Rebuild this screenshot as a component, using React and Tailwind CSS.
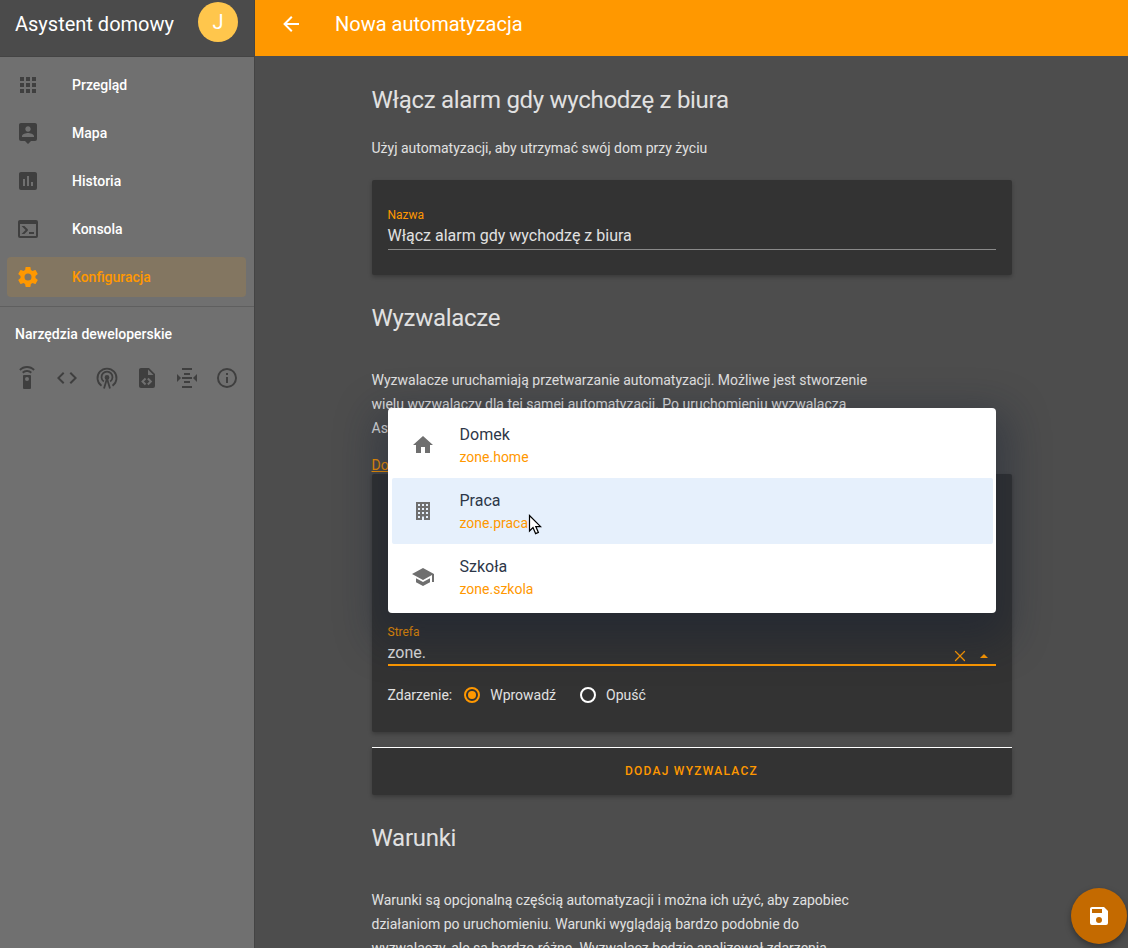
import { X } from "lucide-react";

const ICONS = {
    apps: "M4,8H8V4H4V8M10,20H14V16H10V20M4,20H8V16H4V20M4,14H8V10H4V14M10,14H14V10H10V14M16,4V8H20V4H16M10,8H14V4H10V8M16,14H20V10H16V14M16,20H20V16H16V20Z",
    map: "M18,16H6V15.1C6,13.1 10,12 12,12C14,12 18,13.1 18,15.1M12,5.3C13.5,5.3 14.7,6.5 14.7,8C14.7,9.5 13.5,10.7 12,10.7C10.5,10.7 9.3,9.5 9.3,8C9.3,6.5 10.5,5.3 12,5.3M19,2H5C3.89,2 3,2.89 3,4V18A2,2 0 0,0 5,20H9L12,23L15,20H19A2,2 0 0,0 21,18V4C21,2.89 20.1,2 19,2Z",
    poll: "M17,17H15V13H17M13,17H11V7H13M9,17H7V10H9M19,3H5C3.89,3 3,3.89 3,5V19A2,2 0 0,0 5,21H19A2,2 0 0,0 21,19V5C21,3.89 20.1,3 19,3Z",
    console: "M20,19V7H4V19H20M20,3A2,2 0 0,1 22,5V19A2,2 0 0,1 20,21H4A2,2 0 0,1 2,19V5C2,3.89 2.9,3 4,3H20M13,17V15H18V17H13M9.58,13L5.57,9H8.4L11.7,12.3C12.09,12.69 12.09,13.33 11.7,13.72L8.42,17H5.59L9.58,13Z",
    settings: "M12,15.5A3.5,3.5 0 0,1 8.5,12A3.5,3.5 0 0,1 12,8.5A3.5,3.5 0 0,1 15.5,12A3.5,3.5 0 0,1 12,15.5M19.43,12.97C19.47,12.65 19.5,12.33 19.5,12C19.5,11.67 19.47,11.34 19.43,11L21.54,9.37C21.73,9.22 21.78,8.95 21.66,8.73L19.66,5.27C19.54,5.05 19.27,4.96 19.05,5.05L16.56,6.05C16.04,5.66 15.5,5.32 14.87,5.07L14.5,2.42C14.46,2.18 14.25,2 14,2H10C9.75,2 9.54,2.18 9.5,2.42L9.13,5.07C8.5,5.32 7.96,5.66 7.44,6.05L4.95,5.05C4.73,4.96 4.46,5.05 4.34,5.27L2.34,8.73C2.21,8.95 2.27,9.22 2.46,9.37L4.57,11C4.53,11.34 4.5,11.67 4.5,12C4.5,12.33 4.53,12.65 4.57,12.97L2.46,14.63C2.27,14.78 2.21,15.05 2.34,15.27L4.34,18.73C4.46,18.95 4.73,19.03 4.95,18.95L7.44,17.94C7.96,18.34 8.5,18.68 9.13,18.93L9.5,21.58C9.54,21.82 9.75,22 10,22H14C14.25,22 14.46,21.82 14.5,21.58L14.87,18.93C15.5,18.67 16.04,18.34 16.56,17.94L19.05,18.95C19.27,19.03 19.54,18.95 19.66,18.73L21.66,15.27C21.78,15.05 21.73,14.78 21.54,14.63L19.43,12.97Z",
    remote: "M12,0C8.96,0 6.21,1.23 4.22,3.22L5.63,4.63C7.26,3 9.5,2 12,2C14.5,2 16.74,3 18.36,4.64L19.77,3.23C17.79,1.23 15.04,0 12,0M7.05,6.05L8.46,7.46C9.37,6.56 10.62,6 12,6C13.38,6 14.63,6.56 15.54,7.46L16.95,6.05C15.68,4.78 13.93,4 12,4C10.07,4 8.32,4.78 7.05,6.05M12,15A2,2 0 0,1 10,13A2,2 0 0,1 12,11A2,2 0 0,1 14,13A2,2 0 0,1 12,15M15,9H9A1,1 0 0,0 8,10V22A1,1 0 0,0 9,23H15A1,1 0 0,0 16,22V10A1,1 0 0,0 15,9Z",
    code: "M14.6,16.6L19.2,12L14.6,7.4L16,6L22,12L16,18L14.6,16.6M9.4,16.6L4.8,12L9.4,7.4L8,6L2,12L8,18L9.4,16.6Z",
    fileCode: "M13,9H18.5L13,3.5V9M6,2H14L20,8V20A2,2 0 0,1 18,22H6C4.89,22 4,21.1 4,20V4C4,2.89 4.89,2 6,2M6.12,15.5L9.86,19.24L11.28,17.83L8.95,15.5L11.28,13.17L9.86,11.76L6.12,15.5M17.28,15.5L13.54,11.76L12.12,13.17L14.45,15.5L12.12,17.83L13.54,19.24L17.28,15.5Z",
    events: "M7,2H17V4H7V2M9,7H15V9H9V7M7,11H17V13H7V11M9,15H15V17H9V15M7,20H17V22H7V20M2,8L6,12L2,16V8M22,8V16L18,12L22,8Z",
    info: "M11,9H13V7H11M12,20C7.59,20 4,16.41 4,12C4,7.59 7.59,4 12,4C16.41,4 20,7.59 20,12C20,16.41 16.41,20 12,20M12,2A10,10 0 0,0 2,12A10,10 0 0,0 12,22A10,10 0 0,0 22,12A10,10 0 0,0 12,2M11,17H13V11H11V17Z",
    home: "M10,20V14H14V20H19V12H22L12,3L2,12H5V20H10Z",
    office: "M5,3V21H11V17.5H13V21H19V3H5M7,5H9V7H7V5M11,5H13V7H11V5M15,5H17V7H15V5M7,9H9V11H7V9M11,9H13V11H11V9M15,9H17V11H15V9M7,13H9V15H7V13M11,13H13V15H11V13M15,13H17V15H15V13M7,17H9V19H7V17M15,17H17V19H15V17Z",
    school: "M12,3L1,9L12,15L21,10.09V17H23V9M5,13.18V17.18L12,21L19,17.18V13.18L12,17L5,13.18Z",
    save: "M15,9H5V5H15M12,19A3,3 0 0,1 9,16A3,3 0 0,1 12,13A3,3 0 0,1 15,16A3,3 0 0,1 12,19M17,3H5C3.89,3 3,3.9 3,5V19A2,2 0 0,0 5,21H19A2,2 0 0,0 21,19V7L17,3Z",
    back: "M20,11V13H8L13.5,18.5L12.08,19.92L4.16,12L12.08,4.08L13.5,5.5L8,11H20Z",
};

function Icon({ d, className }) {
    return (
        <svg viewBox="0 0 24 24" className={`w-6 h-6 shrink-0 fill-current ${className || ""}`}>
            <path d={d} />
        </svg>
    );
}

function RadioTower({ className }) {
    return (
        <svg viewBox="0 0 24 24" className={`w-6 h-6 shrink-0 ${className || ""}`} fill="none" stroke="currentColor" strokeWidth="1.8">
            <path d="M6.5 19.8A9.5 9.5 0 1 1 17.5 19.8" />
            <path d="M8.8 15.6A5.5 5.5 0 1 1 15.2 15.6" />
            <circle cx="12" cy="11.5" r="1.5" fill="currentColor" />
            <path d="M12 12.5L9 22.5M12 12.5L15 22.5" />
        </svg>
    );
}

const NAV = [
    { label: "Przegląd", icon: ICONS.apps },
    { label: "Mapa", icon: ICONS.map },
    { label: "Historia", icon: ICONS.poll },
    { label: "Konsola", icon: ICONS.console },
    { label: "Konfiguracja", icon: ICONS.settings, active: true },
];

const ZONES = [
    { name: "Domek", id: "zone.home", icon: ICONS.home },
    { name: "Praca", id: "zone.praca", icon: ICONS.office, hover: true },
    { name: "Szkoła", id: "zone.szkola", icon: ICONS.school },
];

function Sidebar() {
    return (
        <aside className="w-[255px] shrink-0 h-full bg-[#707070] text-white">
            <div className="h-[57px] bg-[#4b4b4b] border-b border-[#444] flex items-start pl-[15px] pr-[17px]">
                <div className="text-xl leading-[48px] flex-1">Asystent domowy</div>
                <div className="mt-0.5 w-10 h-10 rounded-full bg-[#ffc64c] flex items-center justify-center text-xl text-white">J</div>
            </div>

            <nav className="pt-2 pl-[7px] pr-[9px] flex flex-col gap-2">
                {NAV.map((item) => (
                    <div
                        key={item.label}
                        className={`h-10 flex items-center pl-[9px] rounded text-sm font-medium ${item.active ? "bg-[#837661] text-[#ff9800]" : "text-white"}`}
                    >
                        <Icon d={item.icon} className={item.active ? "text-[#ff9800]" : "text-[#3f3f3f]"} />
                        <span className="ml-8">{item.label}</span>
                    </div>
                ))}
            </nav>

            <div className="mt-[9px] border-t border-[#5f5f5f]"></div>

            <div className="pl-[15px] pt-[18px] text-sm font-medium leading-[18px]">Narzędzia deweloperskie</div>

            <div className="flex gap-4 pl-[15px] mt-[23px] text-[#3f3f3f]">
                <Icon d={ICONS.remote} />
                <Icon d={ICONS.code} />
                <RadioTower />
                <Icon d={ICONS.fileCode} />
                <Icon d={ICONS.events} />
                <Icon d={ICONS.info} />
            </div>
        </aside>
    );
}

function Card({ className, children }) {
    return (
        <div className={`bg-[#333333] rounded-[2px] shadow-[0_2px_4px_rgba(0,0,0,0.25)] ${className || ""}`}>
            {children}
        </div>
    );
}

function ZoneDropdown() {
    return (
        <div className="absolute left-[16.5px] -top-[66px] w-[608px] bg-white rounded pt-1 pb-[3px] pl-1 pr-[3px] shadow-[0_16px_40px_12px_rgba(20,30,50,0.4)] z-10">
            {ZONES.map((zone) => (
                <div key={zone.id} className={`h-[66px] flex items-center rounded-[2px] ${zone.hover ? "bg-[#e6f0fc]" : ""}`}>
                    <Icon d={zone.icon} className="ml-[19px] text-[#6f6f6f]" />
                    <div className="ml-[24.5px]">
                        <div className="text-base leading-6 text-[#2d3748]">{zone.name}</div>
                        <div className="text-sm leading-5 text-[#ff9800]">{zone.id}</div>
                    </div>
                </div>
            ))}
            {/* mouse pointer */}
            <svg viewBox="0 0 14 22" className="absolute left-[140px] top-[106px] w-[14px] h-[22px]">
                <path d="M1.5 1.5V17L5 13.6L7.6 19.6L10.4 18.4L7.8 12.6H12.6Z" fill="#fff" stroke="#000" strokeWidth="1.2" />
            </svg>
        </div>
    );
}

function Radio({ label, checked }) {
    return (
        <div className="flex items-center mt-px">
            <span className={`w-4 h-4 rounded-full border-2 flex items-center justify-center ${checked ? "border-[#ff9800]" : "border-white"}`}>
                {checked && <span className="w-2 h-2 rounded-full bg-[#ff9800]"></span>}
            </span>
            <span className="ml-[10px] text-sm text-[#e1e1e1]">{label}</span>
        </div>
    );
}

function App() {
    return (
        <div className="flex h-[948px] overflow-hidden bg-[#4d4d4d] text-[#e1e1e1] font-['Roboto',sans-serif]">
            <Sidebar />

            <div className="flex-1 min-w-0 flex flex-col border-l border-[#444] -ml-px">
                <header className="h-14 shrink-0 bg-[#ff9800] text-white flex items-start">
                    <Icon d={ICONS.back} className="ml-6 mt-3" />
                    <h1 className="ml-8 text-xl leading-[48px]">Nowa automatyzacja</h1>
                </header>

                <main className="flex-1 min-h-0 overflow-hidden pl-[116.5px]">
                    <div className="w-[640px]">
                        <h2 className="text-2xl tracking-[-0.012em] leading-8 mt-7">Włącz alarm gdy wychodzę z biura</h2>
                        <p className="text-sm leading-6 mt-[20px]">Użyj automatyzacji, aby utrzymać swój dom przy życiu</p>

                        <Card className="mt-5 h-[95px] px-4 pt-7">
                            <div className="text-xs leading-[14px] text-[#ff9800]">Nazwa</div>
                            <div className="text-base leading-[27px] text-[#e1e1e1] border-b border-[#8a8a8a]">Włącz alarm gdy wychodzę z biura</div>
                        </Card>

                        <h2 className="text-2xl tracking-[-0.012em] leading-8 mt-[27px]">Wyzwalacze</h2>
                        <p className="text-sm leading-6 mt-[34px] w-[500px]">
                            Wyzwalacze uruchamiają przetwarzanie automatyzacji. Możliwe jest stworzenie wielu wyzwalaczy dla tej samej automatyzacji. Po uruchomieniu wyzwalacza Asystent domowy sprawdzi warunki, a następnie wywoła akcje.
                        </p>
                        <a className="block text-sm leading-6 mt-[13px] text-[#ff9800] underline">Dowiedz się więcej o wyzwalaczach</a>

                        <div className="relative mt-[-3px]">
                            <ZoneDropdown />
                        </div>

                        <Card className="h-[258px] px-4 pt-[151px]">
                            <div className="text-xs leading-[14px] text-[#ff9800]">Strefa</div>
                            <div className="flex items-center h-[27px] border-b-2 border-[#ff9800]">
                                <span className="flex-1 text-base text-[#e1e1e1] pt-[3px]">zone.</span>
                                <X className="w-[18px] h-[18px] text-[#ff9800] mr-[11px] mt-[9px]" strokeWidth={1.75} />
                                <span className="mr-[8px] mt-[9px] w-0 h-0 border-x-[4px] border-x-transparent border-b-[4px] border-b-[#ff9800]"></span>
                            </div>
                            <div className="flex items-center mt-[18px]">
                                <span className="text-sm text-[#e1e1e1] mr-[12px]">Zdarzenie:</span>
                                <Radio label="Wprowadź" checked />
                                <span className="w-6"></span>
                                <Radio label="Opuść" />
                            </div>
                        </Card>

                        <Card className="mt-[15px] h-[48px] rounded-t-none border-t border-white pb-px flex items-center justify-center">
                            <span className="text-xs font-medium tracking-[1.25px] text-[#ff9800]">DODAJ WYZWALACZ</span>
                        </Card>

                        <h2 className="text-2xl tracking-[-0.012em] leading-8 mt-[27px]">Warunki</h2>
                        <p className="text-sm leading-6 mt-[34px] w-[500px]">
                            Warunki są opcjonalną częścią automatyzacji i można ich użyć, aby zapobiec działaniom po uruchomieniu. Warunki wyglądają bardzo podobnie do wyzwalaczy, ale są bardzo różne. Wyzwalacz będzie analizował zdarzenia
                        </p>
                    </div>
                </main>
            </div>

            <button className="absolute left-[1071px] top-[888px] w-14 h-14 rounded-full bg-[#c46a00] text-white flex items-center justify-center shadow-[0_3px_6px_rgba(0,0,0,0.35)]">
                <Icon d={ICONS.save} />
            </button>
        </div>
    );
}

export default App;
